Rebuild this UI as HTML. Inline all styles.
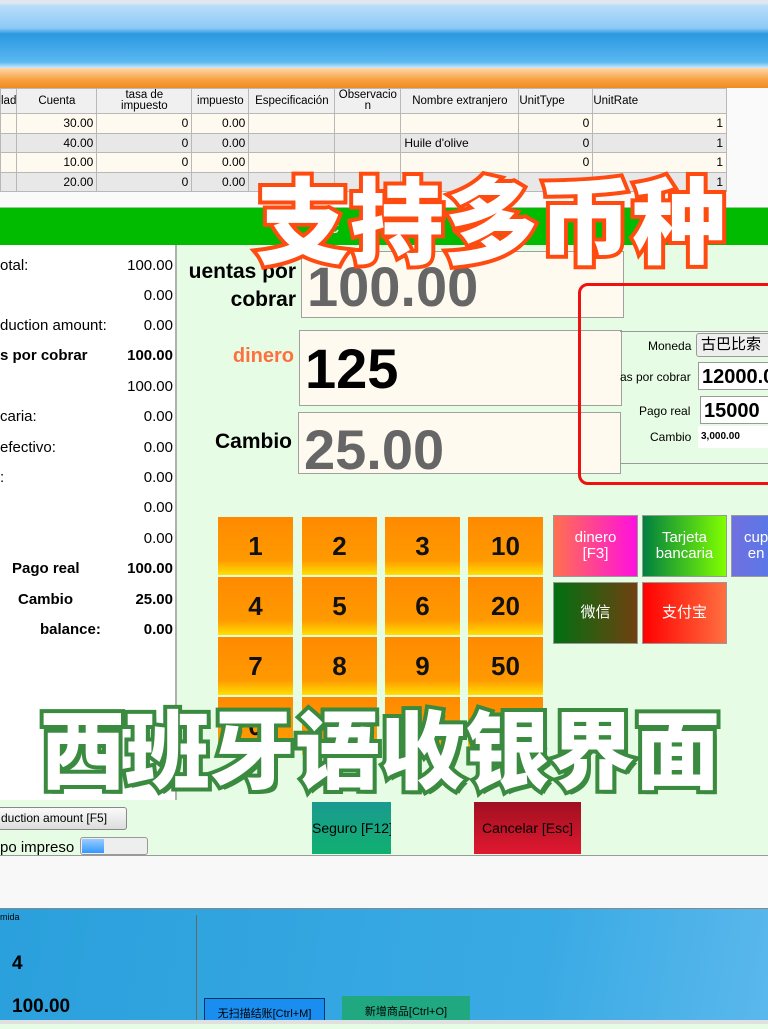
<!DOCTYPE html>
<html><head><meta charset="utf-8"><style>
*{margin:0;padding:0;box-sizing:border-box}
body{width:768px;height:1024px;overflow:hidden;position:relative;background:#e6fce4;font-family:"Liberation Sans","Noto Sans CJK SC",sans-serif}
.a{position:absolute;white-space:nowrap}
table{border-collapse:collapse;font-size:12px;font-family:"Liberation Sans",sans-serif}
td{border:1px solid #b8b8b8;height:19.5px;padding:0 3px;text-align:right}
th{border:1px solid #b8b8b8;height:25px;font-weight:normal;font-size:11.5px;background:#f0f0f0;line-height:11px}
.r1 td{background:#fffaef}.r2 td{background:#e8e8e8}
.lr{position:absolute;left:0;width:173px;font-size:15px;font-family:"Liberation Sans",sans-serif}
.lr span{position:absolute;right:0}
.box{position:absolute;background:#fffaf0;border:1px solid #a0a0a0}
.k{position:absolute;width:75px;height:58px;background:linear-gradient(#ff8a00,#ff9a00 75%,#ffe000);font:bold 26px "Liberation Sans",sans-serif;text-align:center;line-height:58px;color:#111}
.p{position:absolute;width:85px;height:62px;color:#fff;text-align:center;font-size:15px;border:1px solid #999;display:flex;align-items:center;justify-content:center;line-height:16px}
.ov{position:absolute;font-family:"Noto Sans CJK SC",sans-serif;font-weight:900;color:#fff;white-space:nowrap}
</style></head><body>
<div class="a" style="left:0;top:0;width:768px;height:68px;background:linear-gradient(#dfe8f0 0,#dfe8f0 3px,#b8dcfa 6px,#8ccaf5 28px,#2a98e0 34px,#5ab8f0 62px,#cfe8fa 68px)"></div>
<div class="a" style="left:0;top:68px;width:768px;height:20px;background:linear-gradient(#fdd8a8,#f7a040 60%,#f08a20)"></div>
<div class="a" style="left:0;top:88px;width:768px;height:120px;background:#fafafa"></div>
<table class="a" style="left:0;top:88px;width:727px">
<tr><th style="width:16px">lad</th><th style="width:80px">Cuenta</th><th style="width:95px">tasa de<br>impuesto</th><th style="width:57px">impuesto</th><th style="width:86px">Especificación</th><th style="width:66px">Observacio<br>n</th><th style="width:118px">Nombre extranjero</th><th style="width:74px;text-align:left">UnitType</th><th style="text-align:left">UnitRate</th></tr>
<tr class="r1"><td></td><td>30.00</td><td>0</td><td>0.00</td><td></td><td></td><td></td><td>0</td><td>1</td></tr>
<tr class="r2"><td></td><td>40.00</td><td>0</td><td>0.00</td><td></td><td></td><td style="text-align:left">Huile d'olive</td><td>0</td><td>1</td></tr>
<tr class="r1"><td></td><td>10.00</td><td>0</td><td>0.00</td><td></td><td></td><td></td><td>0</td><td>1</td></tr>
<tr class="r2"><td></td><td>20.00</td><td>0</td><td>0.00</td><td></td><td></td><td></td><td>0</td><td>1</td></tr>
</table>
<div class="a" style="left:0;top:207px;width:768px;height:38px;background:#00bb00;border-top:1px solid #9c9;color:#fff;font-size:18px;line-height:38px;padding-left:320px">ec</div>
<div class="a" style="left:0;top:245px;width:177px;height:555px;background:#fff;border-right:2px solid #b0b0b0"></div>
<div class="lr" style="top:257px">otal:<span>100.00</span></div>
<div class="lr" style="top:287px"><span>0.00</span></div>
<div class="lr" style="top:317px">duction amount:<span>0.00</span></div>
<div class="lr" style="top:347px;font-weight:bold">s por cobrar<span>100.00</span></div>
<div class="lr" style="top:378px"><span>100.00</span></div>
<div class="lr" style="top:408px">caria:<span>0.00</span></div>
<div class="lr" style="top:439px"> efectivo:<span>0.00</span></div>
<div class="lr" style="top:469px">:<span>0.00</span></div>
<div class="lr" style="top:499px"><span>0.00</span></div>
<div class="lr" style="top:530px"><span>0.00</span></div>
<div class="lr" style="top:560px;font-weight:bold"><b style="position:absolute;left:12px">Pago real</b><span>100.00</span></div>
<div class="lr" style="top:591px;font-weight:bold"><b style="position:absolute;left:18px">Cambio</b><span>25.00</span></div>
<div class="lr" style="top:621px;font-weight:bold"><b style="position:absolute;left:40px">balance:</b><span>0.00</span></div>
<div class="a" style="left:160px;top:258px;width:136px;text-align:right;font:bold 21px 'Liberation Sans',sans-serif;line-height:28px">uentas por<br>cobrar</div>
<div class="a" style="left:170px;top:345px;width:124px;text-align:right;font:bold 20px 'Liberation Sans',sans-serif;color:#ff7040">dinero</div>
<div class="a" style="left:170px;top:430px;width:122px;text-align:right;font:bold 21px 'Liberation Sans',sans-serif">Cambio</div>
<div class="box" style="left:301px;top:251px;width:323px;height:67px"><div style="font:bold 56px 'Liberation Sans',sans-serif;color:#666;padding-left:5px;line-height:70px">100.00</div></div>
<div class="box" style="left:299px;top:330px;width:323px;height:76px"><div style="font:bold 56px 'Liberation Sans',sans-serif;color:#000;padding-left:5px;line-height:76px">125</div></div>
<div class="box" style="left:298px;top:412px;width:323px;height:62px"><div style="font:bold 56px 'Liberation Sans',sans-serif;color:#666;padding-left:5px;line-height:74px">25.00</div></div>
<div class="a" style="left:620px;top:331px;width:148px;height:1px;background:#999"></div>
<div class="a" style="left:620px;top:463px;width:148px;height:1px;background:#999"></div>
<div class="a" style="left:648px;top:339px;font-size:12px">Moneda</div>
<div class="a" style="left:696px;top:333px;width:80px;height:24px;background:#eee;border:1px solid #999;border-radius:3px;font-size:15px;line-height:22px;padding-left:4px">古巴比索</div>
<div class="a" style="left:620px;top:370px;font-size:12px">as por cobrar</div>
<div class="a" style="left:698px;top:362px;width:80px;height:28px;background:#fff;border:1px solid #999;font:bold 20px 'Liberation Sans',sans-serif;line-height:28px;padding-left:3px">12000.0</div>
<div class="a" style="left:639px;top:404px;font-size:12px">Pago real</div>
<div class="a" style="left:700px;top:396px;width:80px;height:28px;background:#fff;border:1px solid #999;font:bold 20px 'Liberation Sans',sans-serif;line-height:28px;padding-left:3px">15000</div>
<div class="a" style="left:650px;top:430px;font-size:12px">Cambio</div>
<div class="a" style="left:698px;top:426px;width:70px;height:22px;background:#fff;font:bold 10px 'Liberation Sans',sans-serif;line-height:22px;padding-left:3px">3,000.00</div>
<div class="a" style="left:578px;top:283px;width:200px;height:202px;border:3px solid #f01010;border-radius:10px"></div>
<div class="k" style="left:218px;top:517px">1</div><div class="k" style="left:302px;top:517px">2</div><div class="k" style="left:385px;top:517px">3</div><div class="k" style="left:468px;top:517px">10</div>
<div class="k" style="left:218px;top:577px">4</div><div class="k" style="left:302px;top:577px">5</div><div class="k" style="left:385px;top:577px">6</div><div class="k" style="left:468px;top:577px">20</div>
<div class="k" style="left:218px;top:637px">7</div><div class="k" style="left:302px;top:637px">8</div><div class="k" style="left:385px;top:637px">9</div><div class="k" style="left:468px;top:637px">50</div>
<div class="k" style="left:218px;top:697px">0</div><div class="k" style="left:302px;top:697px"></div><div class="k" style="left:385px;top:697px"></div><div class="k" style="left:468px;top:697px"></div>
<div class="p" style="left:553px;top:515px;background:linear-gradient(90deg,#ff7050,#ff10e0)">dinero<br>[F3]</div>
<div class="p" style="left:642px;top:515px;background:linear-gradient(90deg,#008040,#80ff00)">Tarjeta<br>bancaria</div>
<div class="p" style="left:731px;top:515px;background:linear-gradient(90deg,#7070e0,#4080f0);justify-content:flex-start;padding-left:12px">cup<br>en</div>
<div class="p" style="left:553px;top:582px;background:linear-gradient(90deg,#007010,#704010)">微信</div>
<div class="p" style="left:642px;top:582px;background:linear-gradient(90deg,#ff0000,#ff7040)">支付宝</div>
<div class="a" style="left:-4px;top:807px;width:131px;height:23px;background:linear-gradient(#fafafa,#ddd);border:1px solid #888;border-radius:3px;font-size:12px;line-height:21px;padding-left:4px">duction amount [F5]</div>
<div class="a" style="left:0;top:839px;font-size:15px">po impreso</div>
<div class="a" style="left:80px;top:837px;width:68px;height:18px;background:#eee;border:1px solid #999;border-radius:3px"><div style="width:22px;height:14px;margin:1px;background:linear-gradient(#9cf,#39f)"></div></div>
<div class="a" style="left:312px;top:802px;width:79px;height:52px;background:linear-gradient(#1a9a90,#10b070);font-size:14px;line-height:52px;text-align:center;overflow:hidden">Seguro [F12]</div>
<div class="a" style="left:474px;top:802px;width:107px;height:52px;background:linear-gradient(#a01020,#e01830);font-size:14px;line-height:52px;text-align:center;overflow:hidden">Cancelar [Esc]</div>
<div class="a" style="left:0;top:855px;width:768px;height:53px;background:#f8f8f8;border-top:1px solid #999"></div>
<div class="a" style="left:0;top:908px;width:768px;height:116px;background:linear-gradient(100deg,#2aa0dc,#3aaae4 70%,#5ab8ec);border-top:1px solid #888"></div>
<div class="a" style="left:196px;top:915px;width:1px;height:109px;background:#666"></div>
<div class="a" style="left:0;top:912px;font-size:9px">mida</div>
<div class="a" style="left:12px;top:953px;font:bold 19px 'Liberation Sans',sans-serif">4</div>
<div class="a" style="left:12px;top:996px;font:bold 19px 'Liberation Sans',sans-serif">100.00</div>
<div class="a" style="left:204px;top:998px;width:121px;height:24px;background:#1a8ef0;border:1px solid #036;font-size:11px;text-align:center;line-height:30px">无扫描结账[Ctrl+M]</div>
<div class="a" style="left:342px;top:996px;width:128px;height:26px;background:#20a880;font-size:11px;text-align:center;line-height:32px">新增商品[Ctrl+O]</div>
<div class="a" style="left:0;top:1020px;width:768px;height:4px;background:#e0e0e0"></div>
<div class="ov" style="left:256px;top:148px;font-size:94px;letter-spacing:0;-webkit-text-stroke:8px #ff4a10;paint-order:stroke fill">支持多币种</div>
<div class="ov" style="left:40px;top:684px;font-size:85px;letter-spacing:0;-webkit-text-stroke:8px #3a8a40;paint-order:stroke fill;text-shadow:4px 4px 0 #3a8a40">西班牙语收银界面</div>
</body></html>
